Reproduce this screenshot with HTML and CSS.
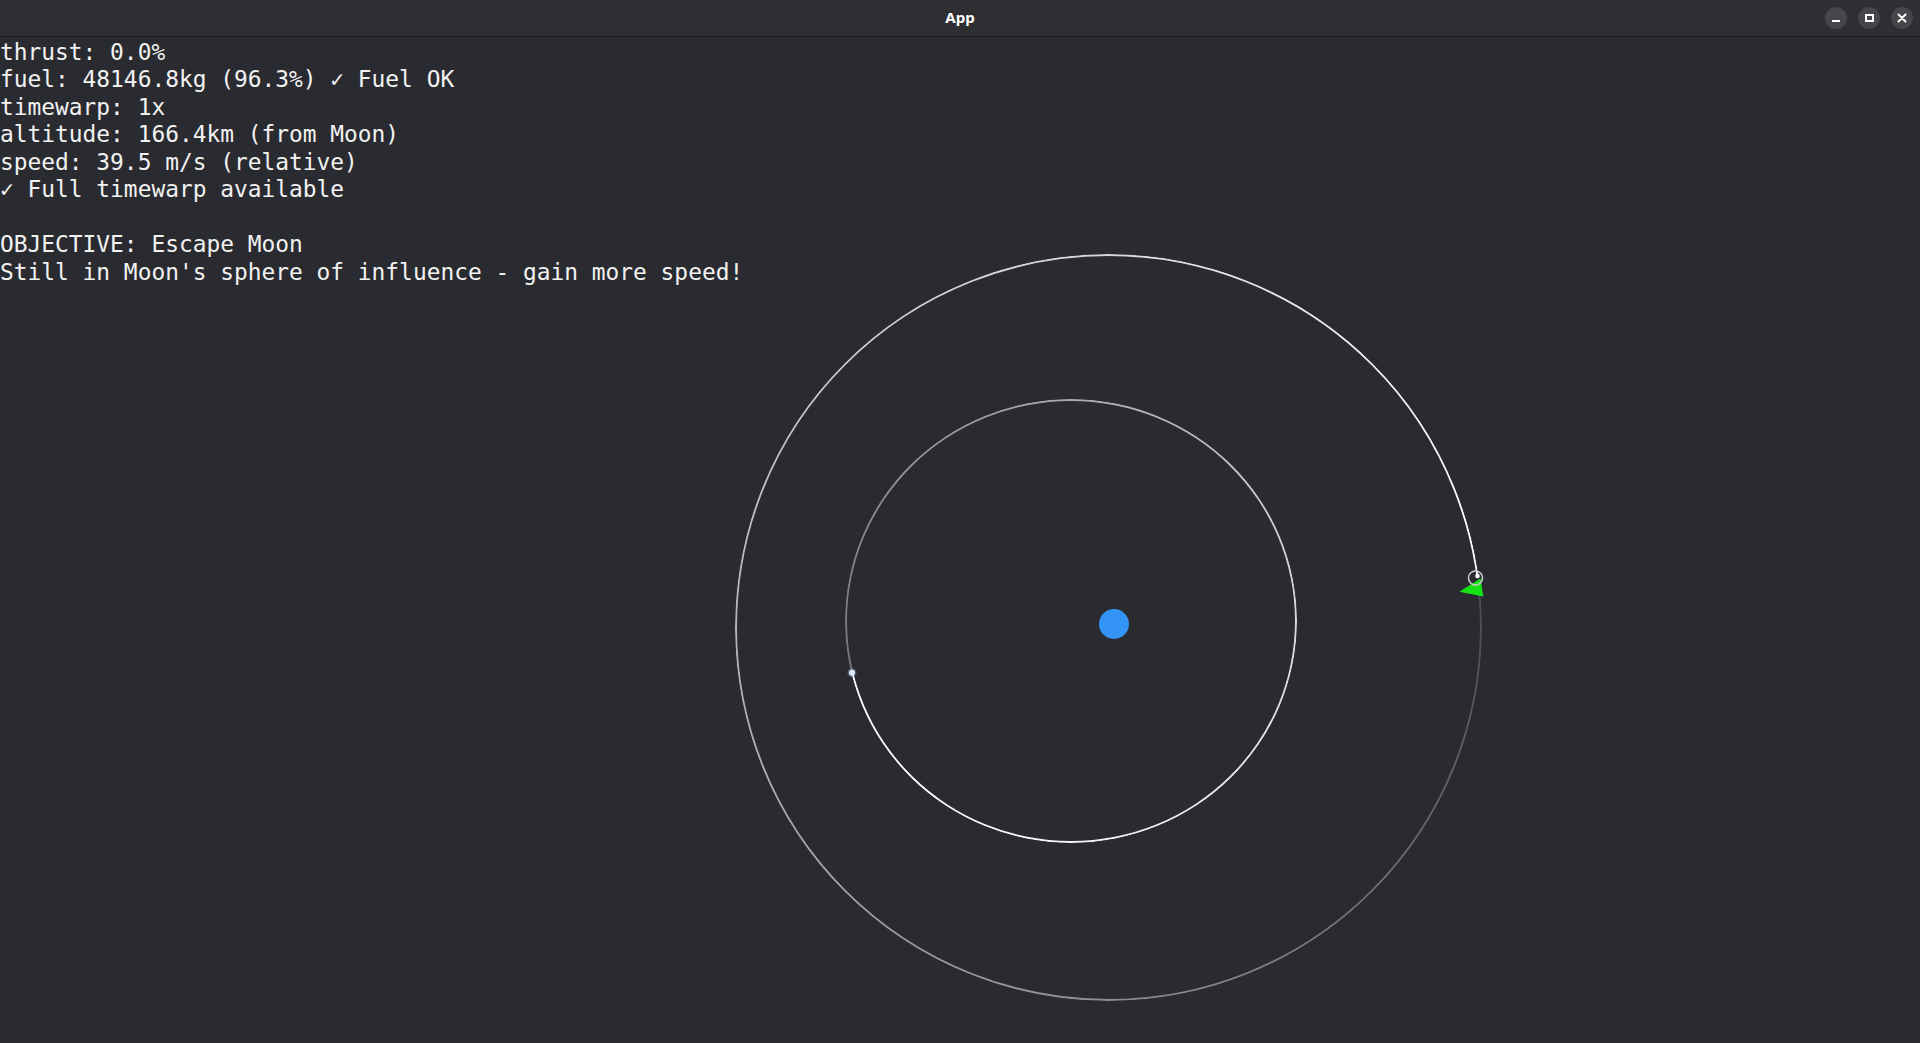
FILE: index.html
```html
<!DOCTYPE html>
<html lang="en">
<head>
<meta charset="utf-8">
<title>App</title>
<link rel="stylesheet" href="styles.css">
</head>
<body>
<div class="window">
  <header class="titlebar">
    <div class="title">App</div>
    <div class="controls">
      <button class="wbtn" aria-label="Minimize"><span class="ico-min"></span></button>
      <button class="wbtn" aria-label="Maximize"><span class="ico-max"></span></button>
      <button class="wbtn" aria-label="Close">
        <svg width="10" height="10" viewBox="0 0 10 10"><path d="M1.5 1.5 L8.5 8.5 M8.5 1.5 L1.5 8.5" stroke="#fff" stroke-width="2" stroke-linecap="round"/></svg>
      </button>
    </div>
  </header>
  <main class="stage">
    <div class="orbit orbit-outer"></div>
    <div class="orbit orbit-inner"></div>
    <svg class="scene" viewBox="0 37 1920 1006" width="1920" height="1006">
      <circle cx="1114" cy="624" r="15" fill="#3394f5"/>
      <circle cx="852" cy="672.8" r="4.5" fill="#cfe6ff" opacity="0.25"/>
      <circle cx="852" cy="672.8" r="3" fill="#d6ebff"/>
      <polygon points="1459.3,591.7 1480.5,578.5 1483.3,596.5" fill="#14e214"/>
      <circle cx="1475.5" cy="578" r="7" fill="none" stroke="#c9c9c9" stroke-width="1.6"/>
      <circle cx="1477.5" cy="576" r="2.3" fill="#ffffff"/>
    </svg>
    <pre class="hud">thrust: 0.0%
fuel: 48146.8kg (96.3%) ✓ Fuel OK
timewarp: 1x
altitude: 166.4km (from Moon)
speed: 39.5 m/s (relative)
✓ Full timewarp available

OBJECTIVE: Escape Moon
Still in Moon's sphere of influence - gain more speed!</pre>
  </main>
</div>
</body>
</html>
```
FILE: styles.css
```css
* { box-sizing: border-box; }
html, body {
  margin: 0;
  padding: 0;
  background: #2a2b30;
  overflow: hidden;
}
.window {
  width: 1920px;
  height: 1043px;
  display: flex;
  flex-direction: column;
}
.titlebar {
  height: 37px;
  flex: none;
  background: #2e2e33;
  border-bottom: 1px solid #1d1d21;
  display: grid;
  grid-template-columns: 1fr auto 1fr;
  align-items: center;
}
.title {
  grid-column: 2;
  font-family: "Noto Sans", "Open Sans", sans-serif;
  font-weight: 700;
  font-size: 15px;
  color: #ffffff;
  line-height: 1;
  margin-top: -2px;
}
.controls {
  grid-column: 3;
  justify-self: end;
  display: flex;
  gap: 11px;
  padding-right: 7px;
}
.wbtn {
  width: 22px;
  height: 22px;
  border-radius: 50%;
  border: none;
  padding: 0;
  background: #45454a;
  display: flex;
  align-items: center;
  justify-content: center;
}
.ico-min {
  width: 8px;
  height: 2px;
  background: #fff;
  margin-top: 6px;
}
.ico-max {
  width: 9px;
  height: 8px;
  border: 2px solid #fff;
}
.stage {
  position: relative;
  flex: 1;
  overflow: hidden;
}
.hud {
  position: relative;
  z-index: 2;
  margin: 0;
  padding-top: 1.5px;
  font-family: "DejaVu Sans Mono", "Liberation Mono", monospace;
  font-size: 22.86px;
  line-height: 27.5px;
  color: #f2f2f2;
}
.orbit {
  position: absolute;
  border-radius: 50%;
  border: 2px solid #ffffff;
}
.orbit-outer {
  left: 734.5px;
  top: 217px;
  width: 747px;
  height: 747px;
  -webkit-mask-image: conic-gradient(from 82.2deg, rgba(0,0,0,0.15), rgba(0,0,0,0.45) 25%, rgba(0,0,0,0.65) 52%, rgba(0,0,0,0.82) 77%, #000);
  mask-image: conic-gradient(from 82.2deg, rgba(0,0,0,0.15), rgba(0,0,0,0.45) 25%, rgba(0,0,0,0.65) 52%, rgba(0,0,0,0.82) 77%, #000);
}
.orbit-inner {
  left: 845px;
  top: 362px;
  width: 452px;
  height: 444px;
  -webkit-mask-image: conic-gradient(from 256.5deg, rgba(0,0,0,0.35), rgba(0,0,0,0.6) 29%, rgba(0,0,0,0.82) 54%, rgba(0,0,0,0.95) 79%, #000);
  mask-image: conic-gradient(from 256.5deg, rgba(0,0,0,0.35), rgba(0,0,0,0.6) 29%, rgba(0,0,0,0.82) 54%, rgba(0,0,0,0.95) 79%, #000);
}
.scene {
  position: absolute;
  left: 0;
  top: 0;
  z-index: 1;
}
```
